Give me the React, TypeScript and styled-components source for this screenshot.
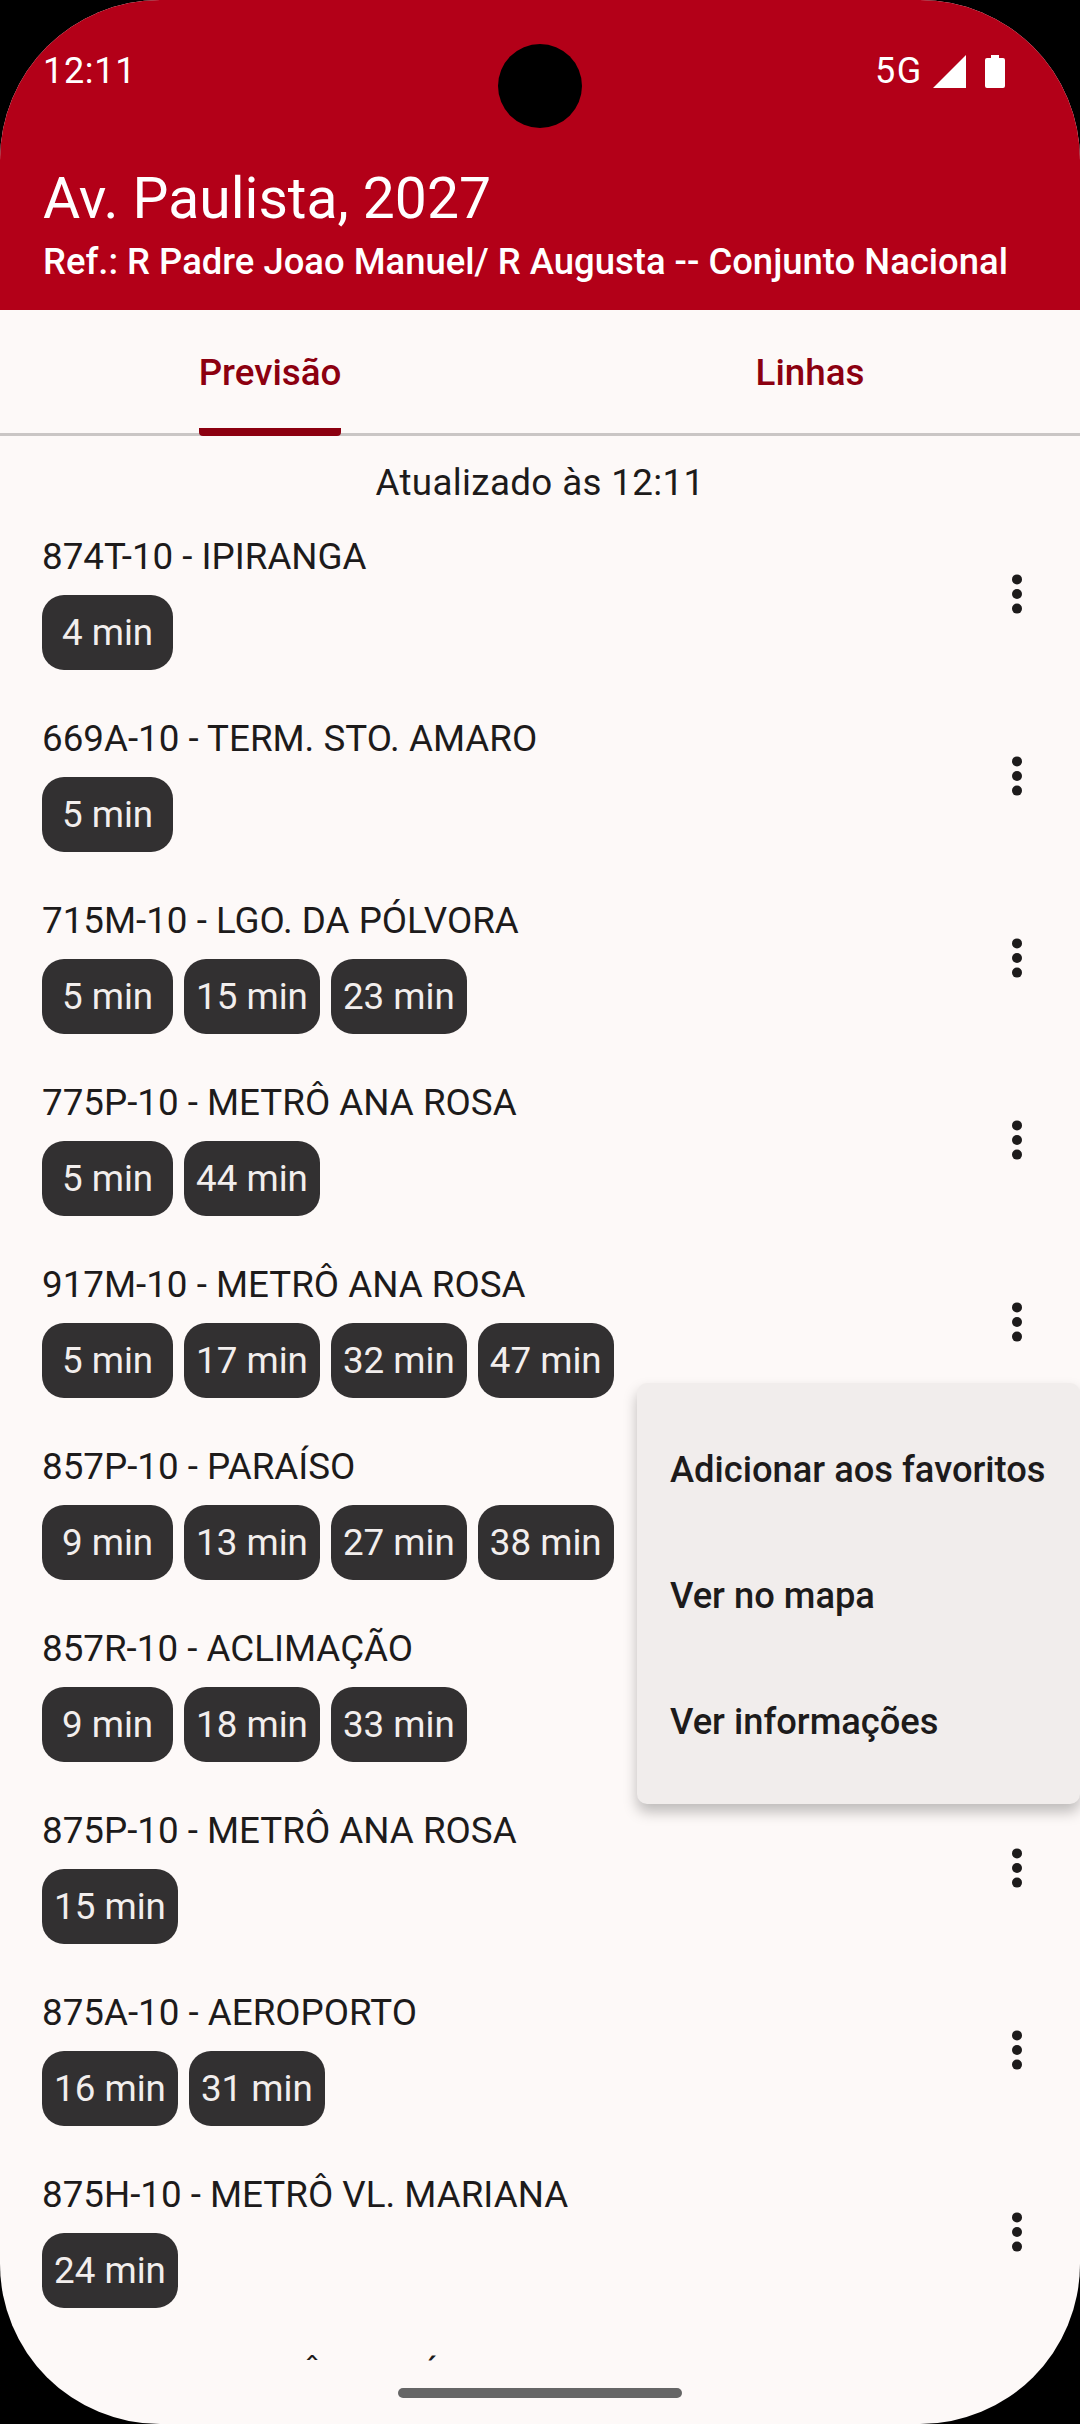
import React from 'react';
import styled, { createGlobalStyle } from 'styled-components';

type Arrival = { line: string; times: number[] };

const arrivals: Arrival[] = [
  { line: '874T-10 - IPIRANGA', times: [4] },
  { line: '669A-10 - TERM. STO. AMARO', times: [5] },
  { line: '715M-10 - LGO. DA PÓLVORA', times: [5, 15, 23] },
  { line: '775P-10 - METRÔ ANA ROSA', times: [5, 44] },
  { line: '917M-10 - METRÔ ANA ROSA', times: [5, 17, 32, 47] },
  { line: '857P-10 - PARAÍSO', times: [9, 13, 27, 38] },
  { line: '857R-10 - ACLIMAÇÃO', times: [9, 18, 33] },
  { line: '875P-10 - METRÔ ANA ROSA', times: [15] },
  { line: '875A-10 - AEROPORTO', times: [16, 31] },
  { line: '875H-10 - METRÔ VL. MARIANA', times: [24] },
  // only the accents of this one show above the navigation area
  { line: '875T-10 - METRÔ PARAÍSO', times: [] },
];

const menuItems = ['Adicionar aos favoritos', 'Ver no mapa', 'Ver informações'];

const App = () => {
  return (
    <>
      <GlobalStyle />
      <Screen>
        <Camera />
        <Header>
          <StatusBar>
            <span>12:11</span>
            <StatusIcons>
              <NetworkLabel>5G</NetworkLabel>
              <SignalIcon width="33" height="33" viewBox="0 0 33 33">
                <path d="M33 0V33H0Z" fill="#fff" />
              </SignalIcon>
              <svg width="20" height="33" viewBox="0 0 20 33">
                <path
                  d="M6 0H14V3H18Q20 3 20 5V31Q20 33 18 33H2Q0 33 0 31V5Q0 3 2 3H6Z"
                  fill="#fff"
                />
              </svg>
            </StatusIcons>
          </StatusBar>
          <StopName>Av. Paulista, 2027</StopName>
          <StopRef>Ref.: R Padre Joao Manuel/ R Augusta -- Conjunto Nacional</StopRef>
        </Header>
        <Tabs>
          <Tab>
            <TabLabel $active>Previsão</TabLabel>
          </Tab>
          <Tab>
            <TabLabel>Linhas</TabLabel>
          </Tab>
        </Tabs>
        <Updated>Atualizado às 12:11</Updated>
        <List>
          {arrivals.map((arrival) => (
            <Row key={arrival.line}>
              <RowBody>
                <LineName>{arrival.line}</LineName>
                <Chips>
                  {arrival.times.map((time) => (
                    <Chip key={time}>{time} min</Chip>
                  ))}
                </Chips>
              </RowBody>
              <MoreIcon width="16" height="46" viewBox="0 0 16 46">
                <circle cx="8" cy="8.4" r="5" fill="#1d1b1b" />
                <circle cx="8" cy="23" r="5" fill="#1d1b1b" />
                <circle cx="8" cy="37.6" r="5" fill="#1d1b1b" />
              </MoreIcon>
            </Row>
          ))}
        </List>
        <NavArea>
          <GestureBar />
        </NavArea>
        <Menu>
          {menuItems.map((item) => (
            <MenuItem key={item}>{item}</MenuItem>
          ))}
        </Menu>
      </Screen>
    </>
  );
};

export default App;

const GlobalStyle = createGlobalStyle`
  html, body {
    margin: 0;
    padding: 0;
    background: #000;
  }
  * {
    box-sizing: border-box;
  }
`;

const Screen = styled.div`
  position: relative;
  display: flex;
  flex-direction: column;
  width: 1080px;
  height: 2424px;
  overflow: hidden;
  border-radius: 160px;
  background: #fdf9f8;
  font-family: Roboto, sans-serif;
  color: #1d1b1b;
`;

const Camera = styled.div`
  position: absolute;
  top: 44px;
  left: 498px;
  width: 84px;
  height: 84px;
  border-radius: 50%;
  background: #000;
`;

const Header = styled.header`
  display: flex;
  flex-direction: column;
  height: 310px;
  padding: 51px 43px 0;
  background: #b30018;
  color: #fff;
`;

const StatusBar = styled.div`
  display: flex;
  align-items: center;
  justify-content: space-between;
  height: 40px;
  margin-bottom: 73px;
  padding-right: 32px;
  font-size: 36px;
  letter-spacing: 0.7px;
  line-height: 40px;
`;

const StatusIcons = styled.div`
  display: flex;
  align-items: center;
  gap: 19px;
`;

const NetworkLabel = styled.span`
  letter-spacing: 1.6px;
`;

const SignalIcon = styled.svg`
  margin-left: -9px;
`;

const StopName = styled.div`
  font-size: 57px;
  line-height: 70px;
`;

const StopRef = styled.div`
  margin-top: 3px;
  font-size: 36.45px;
  font-weight: 500;
  line-height: 50px;
  white-space: nowrap;
`;

const Tabs = styled.nav`
  display: flex;
  flex-shrink: 0;
  height: 126px;
  border-bottom: 3px solid #cac6c5;
`;

const Tab = styled.div`
  display: flex;
  flex: 1;
  justify-content: center;
`;

const TabLabel = styled.div<{ $active?: boolean }>`
  height: 126px;
  padding-top: 39px;
  font-size: 36.75px;
  font-weight: 500;
  line-height: 48px;
  color: #8c0010;
  border-bottom: 8px solid ${(p) => (p.$active ? '#8c0010' : 'transparent')};
  border-radius: 0 0 4px 4px;
`;

const Updated = styled.div`
  flex-shrink: 0;
  height: 66px;
  padding-top: 25px;
  font-size: 36.75px;
  letter-spacing: 0.35px;
  line-height: 44px;
  text-align: center;
`;

const List = styled.main`
  flex: 1;
  min-height: 0;
  overflow: hidden;
`;

const Row = styled.div`
  display: flex;
  align-items: center;
  justify-content: space-between;
  height: 182px;
  padding: 0 55px 0 42px;
`;

const RowBody = styled.div`
  display: flex;
  flex-direction: column;
`;

const LineName = styled.div`
  height: 79px;
  font-size: 36.75px;
  line-height: 82px;
`;

const MoreIcon = styled.svg`
  margin-top: 1px;
`;

const Chips = styled.div`
  display: flex;
  gap: 11px;
  min-height: 75px;
`;

const Chip = styled.div`
  min-width: 131px;
  height: 75px;
  padding: 0 12px;
  border-radius: 22px;
  background: #323031;
  color: #f2eeed;
  font-size: 36.75px;
  line-height: 75px;
  text-align: center;
`;

const NavArea = styled.div`
  display: flex;
  flex-shrink: 0;
  justify-content: center;
  height: 62px;
  padding-top: 26px;
`;

const GestureBar = styled.div`
  width: 284px;
  height: 10px;
  border-radius: 5px;
  background: #666;
`;

const Menu = styled.div`
  position: absolute;
  top: 1383px;
  right: 0;
  display: flex;
  flex-direction: column;
  width: 443px;
  height: 421px;
  padding: 24px 0 0;
  border-radius: 10px;
  background: #f1edec;
  box-shadow: 0 8px 14px rgba(0, 0, 0, 0.25);
`;

const MenuItem = styled.div`
  height: 126px;
  padding-left: 33px;
  font-size: 36.3px;
  font-weight: 500;
  line-height: 126px;
  white-space: nowrap;
`;
